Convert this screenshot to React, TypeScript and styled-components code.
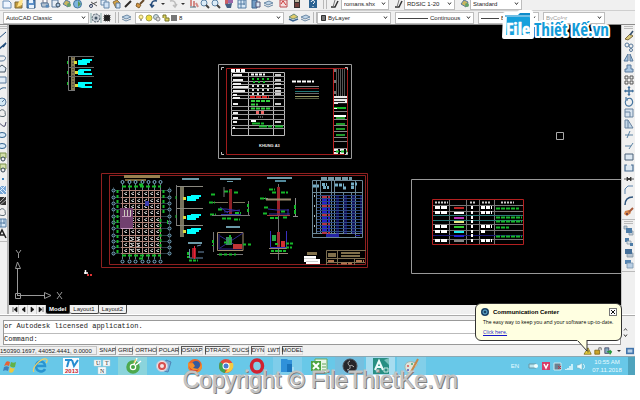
import React from "react";
import styled, { createGlobalStyle } from "styled-components";

const Global = createGlobalStyle`
  * { box-sizing: border-box; }
  body { margin: 0; background: #fff; font-family: "Liberation Sans", Arial, sans-serif; }
  button, select, input { font: inherit; color: inherit; margin: 0; }
`;

const Desktop = styled.div`
  position: relative;
  display: flex;
  flex-direction: column;
  margin-right: 5px;
  overflow: hidden;
  padding-bottom: 25px;
  font-size: 6px;
  color: #222;
`;
const ToolRow = styled.div<{ $top?: boolean }>`
  display: flex;
  align-items: center;
  height: ${(p) => (p.$top ? 11 : 14)}px;
  padding-bottom: ${(p) => (p.$top ? 3 : 0)}px;
  background: #f0f0f0;
  border-bottom: 1px solid ${(p) => (p.$top ? "#cfcfcf" : "#8c8c8c")};
  overflow: hidden;
`;
const Group = styled.div<{ $w: number; $pad?: number }>`
  display: flex;
  flex: none;
  align-items: center;
  justify-content: space-between;
  width: ${(p) => p.$w}px;
  padding: 0 ${(p) => p.$pad ?? 1}px;
`;
const IconButton = styled.button<{ $w?: number }>`
  display: flex;
  flex: none;
  justify-content: center;
  align-items: center;
  width: ${(p) => p.$w ?? 11}px;
  height: 11px;
  padding: 0;
  border: 0;
  background: none;
`;
const Grip = styled.span`
  flex: none;
  width: 4px;
  height: 11px;
  border: solid #b9b9b9;
  border-width: 0 1px;
`;
const ComboBox = styled.label<{ $w: number; $dim?: boolean }>`
  display: flex;
  flex: none;
  align-items: center;
  width: ${(p) => p.$w}px;
  height: 12px;
  margin-right: 4px;
  padding: 0 2px;
  background: #fff;
  border: 1px solid #bdbdbd;
  color: ${(p) => (p.$dim ? "#999" : "#222")};
`;
const ComboSelect = styled.select`
  flex: 1;
  min-width: 0;
  height: 10px;
  padding: 0;
  border: 0;
  background: none;
  appearance: none;
  outline: none;
`;
const Glyph = styled.svg<{ $s?: number }>`
  display: block;
  flex: none;
  width: ${(p) => p.$s ?? 10}px;
  height: ${(p) => p.$s ?? 10}px;
  overflow: visible;
`;

const B = "#58799b";
const L = "#a9c6e2";
const icons: Record<string, React.ReactNode> = {
  sheet: <path d="M1 2H7L9 4V9H1Z" fill="#eef5ff" stroke="#6b8fb8" />,
  open: <><path d="M1 3H5L6 4H8V9H1Z" fill="#c39a3a" stroke="#7c6a3a" /><path d="M5 2L9 0L8 6L3 8Z" fill="#ffe38a" /></>,
  save: <><path d="M1 1H9V9H1Z" fill="#5d91c9" stroke="#31567e" /><path d="M3 1H7V4H3ZM3 6H8V9H3Z" fill="#e8f2fb" /></>,
  print: <><path d="M3 0H7V4H3Z" fill="#fff" stroke="#778" /><path d="M1 4H8L9 8H2Z" fill="#b6c3d0" stroke={B} /><circle cx="7" cy="7" r="1.5" fill="#5588bb" /></>,
  preview: <><path d="M1 1H7V8H1Z" fill="#e6edf5" stroke={B} /><circle cx="7" cy="6" r="2" fill={L} stroke="#345" /></>,
  publish: <><path d="M1 5L4 1L8 3L6 8Z" fill="#c8b560" stroke={B} /><circle cx="7" cy="6" r="2" fill="#64a06a" /></>,
  globe: <><circle cx="4.500" cy="5" r="4" fill="#7db4dc" stroke="#4878a0" /><path d="M5 2L8 5L5 8Z" fill="#5b9852" /></>,
  cut: <><path d="M1 6L8 3M2 3L8 7" stroke="#555" /><circle cx="2" cy="7" r="1.500" fill="none" stroke="#346" /></>,
  copy: <><path d="M1 1H6V6H1Z" fill="#e5effa" stroke="#6688aa" /><path d="M4 3H9V9H4Z" fill="#d1e3f6" stroke="#6688aa" /></>,
  paste: <><path d="M1 3L5 1L8 4L4 9Z" fill="#d9a23d" stroke="#8a7044" /><path d="M4 4H8V9H4Z" fill="#ccdff1" stroke={B} /></>,
  brush: <path d="M8 2L2 8" stroke="#2d2a28" strokeWidth="2" />,
  match: <><path d="M9 1L5 5" stroke="#664a2a" strokeWidth="2" /><path d="M2 4L6 6L4 9L1 7Z" fill="#d59643" stroke="#83602f" /></>,
  undo: <path d="M8 2C3 1 2 4 3 8M1 5L3 8L5 6" fill="none" stroke="#244a79" strokeWidth="1.500" />,
  redo: <path d="M2 2C7 1 8 4 7 8M5 6L7 8L9 5" fill="none" stroke="#bdbdbd" strokeWidth="1.500" />,
  arrow: <path d="M3 4H7L5 6Z" fill="#333" />,
  pan: <><path d="M2 1V7M5 2V8M7 4L9 8" stroke="#d48b86" strokeWidth="2" /><path d="M1 8H7" stroke="#467" /></>,
  zoom: <><circle cx="4" cy="4" r="3" fill="#dcecf8" stroke="#5f84a7" /><path d="M6 6L9 9" stroke="#444" strokeWidth="2" /></>,
  palette: <><path d="M1 1H4V5H1Z" fill="#cd5e64" /><path d="M4 1H9V4H4Z" fill="#9c68aa" /><path d="M1 5L8 4L7 9H3Z" fill="#455f83" /></>,
  grid: <><path d="M1 1H9V9H1Z" fill="#d8e8f6" stroke="#557da4" /><path d="M4 1V9M7 1V6M1 5H8" stroke="#557da4" /></>,
  sheets: <><path d="M1 1H6V9H1Z" fill="#739cc4" stroke="#3b628b" /><path d="M5 3H9V8H5Z" fill="#d9e8f5" stroke="#557" /></>,
  markup: <><path d="M2 1H9V8H2Z" fill="#f5dddd" stroke="#bb4c50" /><path d="M3 5L5 2L8 6" fill="none" stroke="#c33" /></>,
  calc: <><path d="M2 0H8V9H2Z" fill="#34302f" /><path d="M3 1H7V3H3Z" fill="#bcb6a0" /><path d="M3 5H7M3 7H7" stroke="#b0504a" /></>,
  help: <><path d="M1 0H9V9H1Z" fill="#2b6292" /><path d="M3 3C4 0 8 2 6 4L5 5M5 7V8" stroke="#fff" fill="none" /></>,
  pen: <><path d="M1 8H5L8 2" fill="none" stroke="#333" strokeWidth="1.500" /><path d="M3 8L5 1" stroke="#777" /></>,
  gear: <><circle cx="5" cy="5" r="4" fill="#ccd3da" stroke="#44515e" strokeDasharray="2 1" /><circle cx="5" cy="5" r="1.500" fill="#456" /><path d="M0 0V10M10 0V10" stroke="#8aa" /></>,
  dark: <><path d="M2 2H8V8H2Z" fill="#222" stroke="#555" strokeDasharray="1 1" /></>,
  layers: <><path d="M0 4L5 2L9 4L4 6Z" fill="#bed5e9" stroke="#6d8aa6" /><path d="M0 6L4 8L9 6" fill="none" stroke="#6d8aa6" /></>,
  layers2: <><path d="M0 4L5 1L9 4L4 6Z" fill="#e0cb69" stroke="#6d8a76" /><path d="M0 6L4 8L9 6" fill="none" stroke="#3d6794" strokeWidth="1.500" /></>,
  line: <path d="M1 8L9 1" stroke="#234e7c" />,
  ray: <path d="M0 9L9 1M6 5L9 1" stroke="#234e7c" strokeWidth="1.500" />,
  pline: <path d="M1 3H6C10 3 9 8 5 8H3" fill="none" stroke={B} />,
  poly: <path d="M1 4L5 1L9 4L8 8H2Z" fill="#e4edf5" stroke="#456" />,
  rect: <path d="M1 2H9V8H1Z" fill="#e3edf7" stroke={B} />,
  arc: <path d="M1 8C2 3 5 1 9 2" fill="none" stroke="#2f5d8a" />,
  circle: <><circle cx="5" cy="5" r="4" fill="#d5e9f5" stroke={B} /><path d="M5 5L8 2" stroke={B} /></>,
  cloud: <path d="M1 7C0 4 3 4 3 3C5 0 9 3 8 5C10 9 5 9 3 8Z" fill="#eee" stroke="#56656f" />,
  spline: <path d="M1 7C3 1 5 9 8 7L9 3" fill="none" stroke="#446" />,
  ellipse: <ellipse cx="5" cy="5" rx="4" ry="2.500" fill="#d9eaf8" stroke="#35658f" />,
  block: <><path d="M3 1H9V6H3Z" fill="#d3dfaa" stroke="#7a914b" /><circle cx="6" cy="7" r="2" fill="#eee" stroke="#345" /></>,
  point: <path d="M5 4H7V6H5Z" fill="#3f82bb" />,
  hatch: <><path d="M1 1H9V9H1Z" fill="#78a7d6" /><path d="M1 3L7 9M3 1L9 7M1 8L8 1" stroke="#dfeeff" /></>,
  hatch2: <><path d="M1 1H9V9H1Z" fill="#333" /><path d="M1 8L8 1M3 9L9 4" stroke="#aaa" /></>,
  textA: <path d="M1 9L5 1L9 9M3 6H7" fill="none" stroke="#222" strokeWidth="1.500" />,
  erase: <><path d="M1 8L6 3L9 5L4 9Z" fill="#d9c97b" stroke="#7b6940" /><path d="M6 4L9 0" stroke="#35506f" strokeWidth="1.500" /></>,
  copies: <><circle cx="3" cy="3" r="2" fill="none" stroke={B} /><circle cx="7" cy="4" r="2" fill="#eee" stroke={B} /><circle cx="7" cy="8" r="1.500" fill="none" stroke={B} /></>,
  mirror: <path d="M4 1V8H0ZM6 1V8H9Z" fill={L} stroke={B} />,
  offset: <path d="M3 1H7V5H9V8H1V5H3Z" fill={L} stroke={B} />,
  array: <path d="M1 1H4V4H1ZM6 1H9V4H6ZM1 6H4V9H1ZM6 6H9V9H6Z" fill="#eee" stroke="#555" />,
  move: <path d="M5 1V9M1 5H9M4 2L5 1L6 2M4 8L5 9L6 8M2 4L1 5L2 6M8 4L9 5L8 6" fill="none" stroke="#42729e" strokeWidth="1.500" />,
  rotate: <path d="M3 2C8 -1 11 6 6 9C2 10 0 6 2 3L4 3M2 3V0" fill="none" stroke="#4675a0" strokeWidth="1.200" />,
  scale: <path d="M1 1H9V9H1ZM1 4H6V9" fill="#d8e3ee" stroke="#6883a0" />,
  stretch: <path d="M1 1H4L9 9H1ZM4 1V9" fill="#c3d7e8" stroke="#6883a0" />,
  trim: <path d="M1 5H9M6 1L3 8" stroke="#5a82a3" fill="none" />,
  extend: <path d="M1 5H7L9 2M7 5L5 8" stroke="#5a82a3" fill="none" />,
  breakpt: <path d="M1 2H9V8H1Z" fill="#dde8f2" stroke="#4c637b" />,
  breaks: <path d="M3 2H1V8H9V2H7" fill="#dde8f2" stroke="#466b90" strokeWidth="1.200" />,
  join: <path d="M0 5H10M3 3V7L5 5ZM7 3V7L5 5Z" fill="#333" stroke="#333" strokeWidth=".800" />,
  chamfer: <path d="M1 9V4L4 1H9" fill="none" stroke="#5882ab" />,
  fillet: <path d="M1 9C1 4 4 1 9 1" fill="none" stroke="#31577f" strokeWidth="1.500" />,
  explode: <><path d="M1 4L5 3L7 6L3 9L0 7Z" fill="#d68347" /><path d="M5 5L9 1" stroke="#a85b3b" strokeWidth="2" /><path d="M2 6H4V8H2Z" fill="#744" /></>,
  front: <><path d="M5 5H9V9H5ZM0 0H3V3H0Z" fill="#c2ccd5" stroke="#8797a6" strokeWidth=".800" /><path d="M2 2H8V7H2Z" fill="#4e7da8" /></>,
  back: <><path d="M1 1H5V5H1Z" fill="#4e7da8" /><path d="M3 4H7V7H3Z" fill="#dde4ea" stroke="#8797a6" strokeWidth=".800" /><path d="M6 6H9V9H6Z" fill="#4e7da8" /></>,
  above: <><path d="M3 5H9V9H3Z" fill="#b4c2cf" stroke="#8797a6" strokeWidth=".800" /><path d="M1 1H8V6H1Z" fill="#456f99" /></>,
  under: <><path d="M1 1H7V5H1Z" fill="#5685b2" /><path d="M3 4H9V9H3Z" fill="#b9cfe4" stroke="#7894ad" strokeWidth=".800" /></>,
};
const Icon = ({ n, s }: { n: string; s?: number }) => (
  <Glyph $s={s} viewBox="0 0 10 10" aria-hidden="true">{icons[n]}</Glyph>
);
const Tool = ({ n, w }: { n: string; w?: number }) => (
  <IconButton $w={w} aria-label={n}><Icon n={n} /></IconButton>
);
const Chevron = () => (
  <Glyph $s={5} viewBox="0 0 5 5"><path d="M1 1.500L2.500 3.500L4 1.500" fill="none" stroke="#333" /></Glyph>
);
const Combo = ({ w, label, value, dim, lead }: { w: number; label: string; value: string; dim?: boolean; lead?: React.ReactNode }) => (
  <ComboBox $w={w} $dim={dim}>
    {lead}
    <ComboSelect aria-label={label}><option>{value}</option></ComboSelect>
    <Chevron />
  </ComboBox>
);
const Lead = styled.svg<{ $w: number }>`
  flex: none;
  width: ${(p) => p.$w}px;
  height: 8px;
  margin-right: 2px;
`;

const Workspace = styled.div`
  display: flex;
  background: #f0f0f0;
`;
const SideBar = styled.div<{ $right?: boolean }>`
  display: flex;
  flex-direction: column;
  flex: none;
  width: ${(p) => (p.$right ? 14 : 9)}px;
  border-right: ${(p) => (p.$right ? 0 : 2)}px solid #b4b4b4;
  border-left: ${(p) => (p.$right ? 1 : 0)}px solid #c4c4c4;
  overflow: hidden;
`;
const SideGroup = styled.div<{ $right?: boolean }>`
  display: flex;
  flex-direction: column;
  align-items: ${(p) => (p.$right ? "center" : "flex-end")};
  width: ${(p) => (p.$right ? 13 : 7)}px;
  padding-bottom: 2px;
  border-bottom: 1px solid #bbb;
`;
const SideGrip = styled.span`
  width: 9px;
  height: 3px;
  margin: 1px 0;
  border: solid #bbb;
  border-width: 1px 0;
`;
const Center = styled.div`
  flex: 1;
  min-width: 0;
`;
const Drawing = styled.svg`
  display: block;
  width: 100%;
  height: 280px;
  background: #000;
`;
const Tabs = styled.div`
  display: flex;
  align-items: center;
  height: 9px;
  padding-left: 1px;
`;
const NavButton = styled.button`
  display: flex;
  width: 9px;
  height: 9px;
  padding: 1px;
  border: 0;
  border-right: 1px solid #ccc;
  background: none;
`;
const Tab = styled.button<{ $on?: boolean }>`
  height: 9px;
  padding: 0 3px;
  border: 0;
  line-height: 8px;
  font-weight: ${(p) => (p.$on ? "bold" : "normal")};
  color: ${(p) => (p.$on ? "#fff" : "#222")};
  background: ${(p) => (p.$on ? "#000" : "#f0f0f0")};
  border-right: 1px solid #444;
  border-bottom: 1px solid #444;
  border-radius: 0 0 2px 2px;
`;

const Command = styled.div`
  display: flex;
  margin-top: 1px;
  padding: 4px 4px 0 0;
  background: #f0f0f0;
  border-top: 1px solid #aaa;
`;
const CommandGrip = styled.span`
  width: 4px;
  border-right: 1px solid #999;
`;
const CommandBody = styled.div`
  flex: 1;
  background: #fff;
  border: 1px solid #999;
  border-left: 0;
  font-family: "Liberation Mono", monospace;
  font-size: 7px;
`;
const History = styled.div`
  height: 12px;
  line-height: 10px;
`;
const Prompt = styled.label`
  display: flex;
  height: 11px;
  border-top: 1px solid #bbb;
  line-height: 10px;
`;
const PromptInput = styled.input`
  flex: 1;
  min-width: 0;
  border: 0;
  outline: none;
  padding: 0;
  background: none;
`;
const Scroll = styled.div`
  display: flex;
  flex-direction: column;
  justify-content: center;
  gap: 1px;
  width: 10px;
  padding: 2px;
`;
const Status = styled.div`
  display: flex;
  align-items: center;
  gap: 2px;
  height: 11px;
  padding-right: 1px;
  background: #f0f0f0;
`;
const Coords = styled.span`
  width: 97px;
  height: 9px;
  line-height: 8px;
  border: 1px solid #c4c4c4;
  border-left: 0;
  white-space: nowrap;
`;
const Mode = styled.button<{ $w: number; $on?: boolean }>`
  display: flex;
  align-items: center;
  justify-content: center;
  width: ${(p) => p.$w}px;
  height: 9px;
  padding: 0;
  line-height: 7px;
  background: #f0f0f0;
  border: 1px solid;
  border-color: ${(p) => (p.$on ? "#555 #ddd #ddd #555" : "#fafafa #999 #aaa #fafafa")};
`;
const Spring = styled.span`
  flex: 1;
`;

const Taskbar = styled.div`
  display: flex;
  align-items: stretch;
  height: 19px;
  background: #68c8e8;
  border-top: 1px solid #8ba8b3;
`;
const Task = styled.button<{ $w?: number; $bg?: string }>`
  display: flex;
  flex: none;
  align-items: center;
  justify-content: center;
  width: ${(p) => p.$w ?? 29}px;
  margin-right: 2px;
  padding: 0;
  border: 0;
  background: ${(p) => p.$bg ?? "none"};
`;
const Tray = styled.div`
  display: flex;
  align-items: center;
  gap: 3px;
  color: #e9fbff;
`;
const Clock = styled.time`
  width: 36px;
  text-align: center;
  line-height: 8px;
`;
const ShowDesktop = styled.button`
  width: 7px;
  align-self: stretch;
  padding: 0;
  border: 0;
  background: #4fa3bd;
`;

const Balloon = styled.section`
  position: absolute;
  top: 303px;
  right: 13px;
  width: 147px;
  height: 38px;
  padding: 3px 4px 0 7px;
  background: #ffffe1;
  border: 1px solid #333;
  border-radius: 6px;
`;
const BalloonHead = styled.header`
  display: flex;
  align-items: center;
  gap: 4px;
  height: 9px;
  margin-left: -2px;
  font-weight: bold;
  color: #000;
`;
const BalloonText = styled.p`
  margin: 2px 0 0;
  font-family: "Open Sans", "Liberation Sans", sans-serif;
  font-size: 5px;
  line-height: 8px;
  color: #000;
  white-space: nowrap;
`;
const Link = styled.a`
  color: #1515c8;
  text-decoration: underline;
`;
const CloseButton = styled.button`
  display: flex;
  width: 8px;
  height: 8px;
  margin-left: auto;
  padding: 1px;
  background: #fff;
  border: 1px solid #777;
`;
const Tail = styled.svg`
  position: absolute;
  top: 36px;
  right: 30px;
  width: 14px;
  height: 13px;
`;
const Logo = styled.svg`
  position: absolute;
  top: 10px;
  right: 24px;
  width: 110px;
  height: 32px;
  overflow: visible;
`;
const Watermark = styled.div`
  position: absolute;
  top: 367px;
  left: 0;
  right: 0;
  padding-left: 6px;
  text-align: center;
  font-size: 23px;
  line-height: 26px;
  white-space: nowrap;
  color: #c4c4c4;
  text-shadow: 1px 1px 0 #7d7d7d;
  -webkit-text-stroke: 1px #c0c0c0;
  paint-order: stroke;
`;

const H = ({ x1, x2, y, c }: { x1: number; x2: number; y: number; c: string }) => <path d={`M${x1} ${y}H${x2}`} stroke={c} />;
const V = ({ x, y1, y2, c }: { x: number; y1: number; y2: number; c: string }) => <path d={`M${x} ${y1}V${y2}`} stroke={c} />;
const R = ({ b, c }: { b: number[]; c: string }) => <rect x={b[0]} y={b[1]} width={b[2]} height={b[3]} fill={c} />;
const Dash = ({ d, c, w = 1, a = "2 1" }: { d: string; c: string; w?: number; a?: string }) => (
  <path d={d} stroke={c} strokeWidth={w} strokeDasharray={a} fill="none" />
);
const Leaf = ({ x, y }: { x: number; y: number }) => (
  <>
    <path d={`M${x} ${y + 1}H${x + 4}V${y}H${x + 14}V${y + 2}H${x + 12}V${y + 4}H${x + 9}V${y + 6}H${x}Z`} fill="#0ff" />
    <R b={[x - 4, y + 2, 3, 3]} c="#dddc40" />
  </>
);
const G = "#16b82a";
const cols = [122, 129, 135, 142, 148, 154, 160];
const rows = [190, 197, 203, 209, 216, 222, 228, 235, 241, 247, 253];

const WallDetail = () => (
  <g>
    <R b={[71, 56, 4, 34]} c="#847953" />
    <Dash d="M73 57V90" c="#5a5340" w={2} a="1 2" />
    {[56, 67, 76].map((y) => <H key={y} x1={68} x2={94} y={y + 0.5} c="#666" />)}
    <path d="M68.500 56V90.500H75" stroke="#777" fill="none" />
    <Leaf x={78} y={59} />
    <path d="M78 70L80 69H91V71H84V73H92V75H78ZM78 82H92V84H85V86H92V88H82L78 87Z" fill="#0ff" />
    <R b={[75, 71, 3, 3]} c="#dddc40" /><R b={[75, 84, 3, 3]} c="#dddc40" />
    {[61, 71, 82].map((y) => <V key={y} x={67.5} y1={y} y2={y + 3} c={G} />)}
  </g>
);

const lineRows = [76, 81, 84, 88, 92, 95, 98, 106, 110, 114, 119, 125, 128];
const SheetFrame = () => (
  <g fill="none">
    <path d="M218.500 64.500H351.500V158.500H218.500Z" stroke="#999" />
    <path d="M226.500 68.500H347.500V154.500H226.500Z" stroke="#a11c1c" />
    <V x={333.5} y1={68} y2={154} c="#c02020" />
    <path d="M221.500 70V67.500H224M345 67.500H347.500V70M221.500 152V154.500H224M345 154.500H347.500V152" stroke="#bbb" />
    <path d="M231.500 72.500H284.500V135.500H231.500ZM248.500 72V136M273.500 72V136" stroke="#bbb" />
    {lineRows.map((y) => <H key={y} x1={231} x2={285} y={y + 0.5} c="#999" />)}
    <Dash d="M231 70.500H245" c="#fff" w={3} a="4 1" />
    <Dash d="M251 74.500H265" c="#fff" w={2} a="3 1" />
    {[[9, 74], [10, 79], [8, 83], [15, 86], [12, 90], [4, 94], [7, 97], [5, 103], [5, 112], [5, 117], [4, 121], [2, 127]].map(([w, y]) => (
      <R key={y} b={[233, y, w, 2]} c="#eee" />
    ))}
    {[74, 79, 83, 87, 90, 93, 103, 121].map((y) => <R key={y} b={[275, y, 6, 2]} c="#ccc" />)}
    <Dash d="M252 79H272M253 82H268" c={G} w={2} a="2 3" />
    <Dash d="M252 86H270M252 90H270M252 94H266" c="#ddd" w={2} a="2 3" />
    <Dash d="M250 97H269" c="#d22" w={2} a="5 1" />
    <Dash d="M251 101H270M251 104.500H258M251 108.500H271" c="#35d13f" w={2} a="4 1" />
    <Dash d="M256 112.500H266" c="#e66" w={3} a="3 2" />
    <Dash d="M258 117H263" c="#aaa" a="1 1" />
    <R b={[251, 120, 5, 2]} c="#fff" />
    <Dash d="M252 123.500H264M259 126.500H272M275 126.500H284" c={G} w={2} a="8 1" />
    <Dash d="M292 81.500H314" c="#fff" w={2} a="4 1" />
    {[["86", "#888"], ["88", "#922"], ["91", "#277"], ["93", "#666"], ["96", "#996"], ["98", "#586040"]].map(([y, c]) => (
      <H key={y} x1={295} x2={319} y={+y + 0.5} c={c} />
    ))}
    {[336, 338, 340, 342, 344].map((x) => <V key={x} x={x + 0.5} y1={69} y2={96} c="#555" />)}
    <Dash d="M335 69V95" c="#eee" w={1} a="3 8" />
    <R b={[334, 96, 13, 8]} c="#e8e8e8" />
    <path d="M334 98.500H347M334 101.500H345M338 103.500H347" stroke="#222" />
    <R b={[334, 107, 12, 2]} c={G} /><R b={[334, 108, 3, 1]} c="#fff" />
    <R b={[334, 115, 12, 2]} c="#fff" />
    {[111, 119, 125, 131, 137, 141, 148].map((y) => <H key={y} x1={334} x2={347} y={y + 0.5} c="#888" />)}
    {[117, 123, 128, 134].map((y) => <R key={y} b={[336, y, 9, 2]} c="#229a2c" />)}
    <Dash d="M334 150H347M334 153H347" c="#eee" w={2} a="4 2" />
    <Dash d="M336 151.500H347" c={G} w={2} a="3 2" />
    <text x="259" y="147" fill="#eee" fontSize="4" fontWeight="bold">KHUNG A3</text>
  </g>
);

const FloorPlan = () => (
  <g fill="none">
    <R b={[124, 175, 36, 3]} c="#9a8150" /><R b={[125, 179, 21, 2]} c="#776336" />
    {cols.map((x) => (
      <g key={x}>
        <V x={x + 0.5} y1={184} y2={259} c="#69808c" />
        <V x={x + 0.5} y1={190} y2={253} c="#b08880" />
        <circle cx={x + 0.5} cy={182} r={1.5} stroke="#7fb4d0" />
        <circle cx={x + 0.5} cy={261.5} r={1.5} stroke="#7fb4d0" />
      </g>
    ))}
    {rows.map((y) => (
      <g key={y}>
        <H x1={115} x2={168} y={y + 0.5} c="#2d3c45" />
        <H x1={121} x2={161} y={y + 0.5} c="#ad8277" />
        <circle cx={113.5} cy={y + 0.5} r={1.5} stroke="#7fb4d0" />
        <circle cx={169.5} cy={y + 0.5} r={1.5} stroke="#7fb4d0" />
        {y < 253 && cols.slice(0, 6).map((x) => <path key={x} d={`M${x + 2} ${y + 4}l3 -2M${x + 3} ${y + 4.5}h2`} stroke="#ccc" />)}
      </g>
    ))}
    <R b={[120, 208, 13, 21]} c="#71406f" />
    <path d="M122 216.500H131M121 228.500H133" stroke="#c79bc0" />
    <Dash d="M124 213H131" c="#ccb" w={6} a="1 2" />
    <Dash d="M117.500 190V254M163.500 190V215M160.500 219V250" c={G} w={2} a="3 2" />
    <Dash d="M122 186.500H161M122 255.500H161M139 258.500H144M139 184.500H144" c={G} w={2} a="4 2" />
    <R b={[145, 201, 4, 5]} c="#3d3fb0" />
    <path d="M113.500 187V256M169.500 187V256" stroke="#526975" strokeWidth=".500" />
    <Dash d="M131 237V252M138 237V250" c="#bbb" w={3} a="1 2" />
    <Dash d="M114 217.500V225M167.500 220V225" c={G} w={1} a="4 1" />
  </g>
);

const Sections = () => (
  <g fill="none">
    <R b={[182, 178, 17, 2]} c="#6b9aa9" />
    <R b={[180, 186, 4, 51]} c="#77745d" />
    {[186, 208, 225].map((y) => <H key={y} x1={176} x2={203} y={y + 0.5} c="#8b8980" />)}
    <V x={176.5} y1={185} y2={226} c="#777" />
    <Dash d="M176 196V220" c={G} a="3 16" />
    <Leaf x={187} y={195} /><Leaf x={187} y={214} /><Leaf x={187} y={228} />
    <R b={[188, 242, 14, 2]} c="#6b9aa9" />
    <path d="M189.500 249V258H203M197 246L201 245M198 252H204" stroke="#6f8faf" />
    <R b={[192, 248, 4, 10]} c="#a51d2d" /><V x={194.5} y1={246} y2={259} c="#e23" />
    <Dash d="M189 260.500H198M188 252V258" c={G} w={2} a="3 1" />

    <R b={[220, 178, 21, 2]} c="#6b9aa9" /><R b={[227, 181, 6, 1]} c="#6b9aa9" />
    <R b={[229, 189, 3, 26]} c="#8d1f26" />
    <path d="M213 202.500H228M233 202.500H245" stroke="#7e755f" />
    <path d="M221 214.500H241M224 212L240 210M220 207L228 213M218 209H226L240 211" stroke="#352fa0" />
    <H x1={222} x2={240} y={215.5} c="#a2383e" />
    <Dash d="M211 194.500H216M224 191.500H230M234 192.500H238M209 202.500H215M218 209.500H223M210 214.500H216M235 213H241M222 218.500H231M234 219.500H240" c={G} w={2} a="4 1" />
    <path d="M248.500 201V216M224 187V197M212 215.500H250" stroke="#777" />
    <Dash d="M248 204V214" c={G} w={2} a="3 2" />

    <R b={[267, 177, 25, 2]} c="#6b9aa9" /><R b={[275, 180, 11, 2]} c="#52899b" />
    <V x={278.5} y1={184} y2={260} c="#707070" />
    <R b={[277, 187, 3, 28]} c="#9b2028" />
    <path d="M266 199.500H291" stroke="#9c8c70" strokeWidth="2" />
    <path d="M268 209L277 210H289M269 214H290M288 209V215" stroke="#352fa0" />
    <H x1={267} x2={290} y={215.5} c="#a2383e" />
    <path d="M260 198.500H268M295.500 198V216M293 216.500H298" stroke="#8a8a8a" />
    <Dash d="M269 189.500H275M272 192.500H277M281 192.500H288M260 198.500H266M264 207.500H269M263 213.500H268M281 211.500H286M270 218H278M283 217.500H287M295 205V214" c={G} w={2} a="4 1" />

    <R b={[226, 226, 14, 2]} c="#6b9aa9" />
    <path d="M217.500 232.500H243V250.500H217.500Z" stroke="#a38e70" />
    <path d="M220 236L240 248M220 248L243 233M219 234V249H242" stroke="#30298c" />
    <R b={[233, 244, 9, 5]} c="#c03536" /><R b={[226, 237, 6, 8]} c="#3b8e61" />
    <path d="M213.500 232V252M217 254.500H243" stroke="#777" />
    <Dash d="M213 240V246M219 254.500H236M224 242.500H230M230 235V243M243 244.500H251" c={G} w={2} a="3 2" />

    <path d="M270.500 231V247.500H286.500V231" stroke="#3930bd" />
    <R b={[277, 232, 3, 15]} c="#a52a35" /><R b={[281, 241, 4, 6]} c="#d12f31" /><R b={[272, 235, 4, 6]} c="#26a747" />
    <path d="M269 248.500H287M270 253.500H288" stroke="#988873" />
    <Dash d="M271 251H287M286 243.500H294M286 247.500H292M275 244H278" c={G} w={2} a="3 1" />
  </g>
);

const Schedule = () => (
  <g fill="none">
    <Dash d="M321 178.500H352" c="#739aa8" w={3} a="6 1" />
    <path d="M312.500 180.500H362.500V237.500H312.500ZM316.500 180V234M320.500 180V234M331.500 180V234M334.500 180V234M343.500 192V234M351.500 192V234M355.500 180V237M312 192.500H363M312 233.500H363" stroke="#6b8796" />
    {[195, 198, 201, 204, 207, 210, 213, 216, 219, 222, 225, 228, 231].map((y, i) => (
      <g key={y}>
        <H x1={317} x2={362} y={y + 0.5} c="#2d4a80" />
        <Dash d={`M322 ${y + 2}H330`} c={i % 3 === 0 ? "#b23445" : "#2423c9"} w={2} a="5 1" />
        <Dash d={`M336 ${y + 2}H362`} c="#2420b6" a="3 5" />
      </g>
    ))}
    <Dash d="M313 186H319M322 184.500H327M335 185H344M351 184H357M323 187.500H329M343 188H347M351 187.500H354" c="#77afc7" w={3} a="3 1" />
    <R b={[326, 234, 13, 3]} c="#2424a5" /><R b={[355, 235, 5, 1]} c="#2424a5" />
    <Dash d="M314.500 195V232" c="#a9bbc2" a="2 8" />
    <R b={[307, 252, 10, 3]} c="#81714c" />
    <path d="M304 256H316V259H320V264H306V262H304Z" fill="#fff" />
    <path d="M304 258.500H316M306 261.500H318" stroke="#999" strokeWidth=".500" />
    <path d="M326.500 265V250.500H366M337.500 250V265M327 258.500H365M327 262.500H365M354.500 258V265" stroke="#7b6e50" />
    <R b={[328, 253, 8, 4]} c="#81714c" /><R b={[341, 252, 19, 2]} c="#81714c" /><R b={[341, 255, 19, 2]} c="#81714c" />
    <Dash d="M328 261H335M341 263.500H352M356 261H364" c="#b07750" w={2} a="6 1" />
  </g>
);

const legend: [number, string, number][] = [
  [207, "#b22", 1], [212, "#fff", 1], [217, "#b3b", 0], [221, "#ee8", 0],
  [226, "#3c3", 1], [231, "#2ee", 1], [235, "#22c", 0], [240, "#888", 1],
];
const Legend = () => (
  <g fill="none">
    <path d="M622 179.500H411.500V273.500H622" stroke="#999" />
    {[205, 211, 224, 230, 239].map((y) => <H key={y} x1={432} x2={524} y={y + 0.5} c="#777" />)}
    <path d="M449.500 199V244M466.500 199V244M479.500 199V244M494.500 199V244" stroke="#777" />
    <path d="M433 215.500H523M433 220.500H523" stroke="#2a7777" /><H x1={433} x2={523} y={235.5} c="#1a1a77" />
    <path d="M432.500 199.500H523.500V244.500H432.500Z" stroke="#b32020" />
    <Dash d="M435 202.500H448M470 202.500H476M482 202.500H491M501 202.500H514" c="#ccc" w={2} a="2 1" />
    {legend.map(([y, c, names]) => (
      <g key={y}>
        <R b={[454, y, 10, 2]} c={c} />
        <R b={[471, y - 1, 2, 3]} c="#fff" />
        {names === 1 && <><R b={[435, y - 1, 5, 3]} c="#fff" /><R b={[441, y - 1, 6, 3]} c="#fff" /><Dash d={`M481 ${y + 0.5}H${y === 231 ? 486 : 492}`} c="#fff" w={3} a="4 1" /></>}
      </g>
    ))}
    {[[208, 519], [217, 522], [221, 522], [227, 509], [236, 522]].map(([y, x]) => <Dash key={y} d={`M496 ${y + 0.5}H${x}`} c={G} w={2} a="4 1" />)}
  </g>
);

const draw = ["line", "ray", "pline", "poly", "rect", "arc", "circle", "cloud", "spline", "ellipse", "ellipse", "block", "block", "point", "hatch", "hatch2", "cloud", "grid", "textA"];
const modify = ["erase", "copies", "mirror", "offset", "array", "move", "rotate", "scale", "stretch", "trim", "extend", "breakpt", "breaks", "join", "chamfer", "fillet", "explode"];
const order = ["front", "back", "above", "under"];
const modes: [string, number, boolean][] = [["SNAP", 17, false], ["GRID", 15, false], ["ORTHO", 22, false], ["POLAR", 20, false], ["OSNAP", 22, true], ["OTRACK", 25, true], ["DUCS", 17, false], ["DYN", 14, true], ["LWT", 13, false], ["MODEL", 21, true]];
const nav = ["M2 1V6M6 1V6L3 3.500Z", "M5 1V6L2 3.500Z", "M2 1V6L5 3.500Z", "M5 1V6M1 1V6L4 3.500Z"];

const A = ({ children }: { children: React.ReactNode }) => <Glyph $s={16} viewBox="0 0 16 16">{children}</Glyph>;
const tasks: [string, string | undefined, React.ReactNode][] = [
  ["Internet Explorer", undefined, <A><path d="M13 11C11 15 4 14 4 8C4 2 13 2 13 8H5" fill="none" stroke="#2994d1" strokeWidth="2.500" /><path d="M2 14C-1 10 9 0 14 1C16 2 15 4 14 5" fill="none" stroke="#f1ce63" strokeWidth="1.200" /></A>],
  ["TV 2013", undefined, <A><path d="M0 0H16V16H0Z" fill="#f7fbff" /><path d="M2 2H9M6 2L4 9M9 2L11 8L15 2" stroke="#258bd0" strokeWidth="2" fill="none" /><text x="2" y="15" fontSize="6" fontWeight="bold" fill="#c91f2d">2013</text></A>],
  ["UTN", undefined, <A><path d="M0 2H7V8H0ZM9 2H16V8H9ZM4 9H12V16H4Z" fill="#f5f9fb" stroke="#b9ccd3" strokeWidth=".500" /><g fontFamily="Liberation Serif" fontSize="6" fill="#333"><text x="2" y="7">U</text><text x="11" y="7">T</text><text x="6" y="15">N</text></g></A>],
  ["Coc Coc", "#8bd4dc", <A><circle cx="8" cy="9" r="5" fill="#fff" stroke="#4da94d" strokeWidth="3.500" /><circle cx="8" cy="9" r="2" fill="#46a346" /><path d="M9 6L12 0M11 7L16 3" stroke="#fff" strokeWidth="1.500" /><path d="M9 5L11 1" stroke="#f0bf45" /></A>],
  ["Reader", undefined, <A><path d="M10 2L15 4L12 14L8 13Z" fill="#7aabd6" stroke="#4e83b5" /><circle cx="6" cy="8" r="5.500" fill="#f7e2e4" stroke="#b9cadb" /><circle cx="6" cy="8" r="3" fill="none" stroke="#d64e4e" strokeWidth="2" /></A>],
  ["Firefox", undefined, <A><circle cx="8" cy="8" r="7" fill="#e8642b" /><circle cx="9" cy="7" r="4" fill="#345b9e" /><path d="M1 4C2 6 4 5 6 5L8 8L6 10L11 11L15 6C16 18 1 17 1 7Z" fill="#f28d2c" /><path d="M2 8C4 13 9 13 12 11C9 16 3 14 2 8Z" fill="#d93838" /></A>],
  ["Chrome", undefined, <A><circle cx="8" cy="8" r="7" fill="#e34b3c" /><path d="M2 4L8 8L7 15C1 14 0 9 2 4Z" fill="#3ca754" /><path d="M8 5H15C17 11 12 15 7 15L11 9Z" fill="#f5cb42" /><circle cx="8" cy="8" r="3.500" fill="#fff" /><circle cx="8" cy="8" r="2.500" fill="#477bd1" /></A>],
  ["Opera", undefined, <A><ellipse cx="8" cy="8" rx="5.500" ry="6" fill="#83cfe7" stroke="#d02231" strokeWidth="3.500" /></A>],
  ["Explorer", "#7fcdea", <A><path d="M1 1H7L8 2H12V14H1Z" fill="#2f91da" /><path d="M7 6H12V14H7Z" fill="#1973bb" /><path d="M12 9H14V14H12Z" fill="#a6dcf3" /></A>],
  ["Excel", undefined, <A><path d="M4 1H16V15H4Z" fill="#e9f5e7" stroke="#69a85c" /><path d="M0 3H10V13H0Z" fill="#4da441" /><path d="M2 5L8 11M8 5L2 11" stroke="#fff" strokeWidth="2" /><path d="M11 6H15M11 9H15M11 12H15" stroke="#63a45c" /></A>],
  ["Recorder", "#76bfdf", <A><circle cx="8" cy="8" r="7" fill="#252529" stroke="#4d4e55" /><path d="M8 3C5 4 6 7 8 8M12 9C9 6 8 8 8 8M5 12C9 11 8 9 8 8" stroke="#bbb" fill="none" /></A>],
  ["AutoCAD", "#a7dcef", <A><path d="M0 0H16V16H0Z" fill="#288f83" /><path d="M2 12L6 3L10 12M3 9H9" fill="none" stroke="#eefafa" strokeWidth="2" /><path d="M11 10H15V14H11Z" fill="none" stroke="#cee9e4" /><path d="M11 2L16 0V7Z" fill="#7bc2bd" /></A>],
  ["Paint", "#82cfe9", <A><path d="M1 10C0 3 8 2 13 6C14 9 8 9 8 14C4 16 2 13 1 10Z" fill="#dfe5dc" stroke="#9fb3ae" /><circle cx="4" cy="8" r="1" fill="#d55" /><circle cx="8" cy="6" r="1" fill="#4a7" /><circle cx="4" cy="12" r="1" fill="#55b" /><path d="M7 14L14 1" stroke="#c78747" strokeWidth="2" /></A>],
];

export default function App() {
  return (
    <Desktop>
      <Global />
      <ToolRow $top>
        <Group $w={37}>{["sheet", "open", "save"].map((n) => <Tool key={n} n={n} />)}</Group>
        <Group $w={49} $pad={2}>{["print", "preview", "publish", "globe"].map((n) => <Tool key={n} n={n} />)}</Group>
        <Group $w={61} $pad={2}>{["cut", "copy", "paste", "brush", "match"].map((n) => <Tool key={n} n={n} />)}</Group>
        <Group $w={40}><Tool n="undo" /><Tool n="arrow" w={6} /><Tool n="redo" /><Tool n="arrow" w={6} /></Group>
        <Group $w={35}><Tool n="pan" /><Tool n="zoom" /><Tool n="zoom" /></Group>
        <Group $w={100}>{["palette", "grid", "sheets", "layers", "markup", "calc"].map((n) => <Tool key={n} n={n} />)}<Tool n="help" w={16} /></Group>
        <Group $w={19}><Grip /><Tool n="pen" /></Group>
        <Combo w={48} label="Text style" value="romans.shx" />
        <Tool n="pen" />
        <Combo w={51} label="Dimension style" value="RDSIC 1-20" />
        <Tool n="publish" />
        <Combo w={52} label="Table style" value="Standard" />
      </ToolRow>
      <ToolRow>
        <Group $w={3} />
        <Combo w={86} label="Workspace" value="AutoCAD Classic" />
        <Tool n="gear" w={5} />
        <Group $w={37} $pad={3}><Tool n="dark" /><Grip /><Tool n="layers" /></Group>
        <Combo w={149} label="Layer" value="8" lead={
          <Lead $w={39} viewBox="0 0 39 8">
            <circle cx="3" cy="3" r="2" fill="#fff2a0" stroke="#b6a85b" /><path d="M2 6H4" stroke="#555" />
            <circle cx="11" cy="4" r="3" fill="#f0dc3b" stroke="#a5a44d" />
            <circle cx="18" cy="3" r="2.500" fill="#cad8db" stroke="#778d95" /><circle cx="20" cy="5" r="2" fill="#ddd" stroke="#888" />
            <path d="M25 4V1H28V4H31V7H27V4" fill="#ded35c" stroke="#77752a" />
            <path d="M33 1H39V7H33Z" fill="#777" />
          </Lead>
        } />
        <Group $w={29} $pad={0}><Tool n="layers2" /><Tool n="layers" /><Grip /></Group>
        <Combo w={74} label="Color" value="ByLayer" lead={<Lead $w={6} viewBox="0 0 6 8"><path d="M1.500 1.500H5.500V6.500H1.500Z" fill="#777" stroke="#333" /></Lead>} />
        <Combo w={79} label="Linetype" value="Continuous" lead={<Lead $w={30} viewBox="0 0 30 8"><path d="M0 4.500H30" stroke="#444" /></Lead>} />
        <Combo w={61} label="Lineweight" value="ByLayer" lead={<Lead $w={18} viewBox="0 0 18 8"><path d="M0 4.500H18" stroke="#444" /></Lead>} />
        <Combo w={62} dim label="Plot style" value="ByColor" />
      </ToolRow>

      <Workspace>
        <SideBar>
          <SideGroup><SideGrip />{draw.map((n, i) => <Tool key={i} n={n} />)}</SideGroup>
        </SideBar>
        <Center>
          <Drawing viewBox="9 25 612 280" preserveAspectRatio="xMinYMin slice" role="img" aria-label="Model space">
            <WallDetail />
            <SheetFrame />
            <path d="M101.500 173.500H367.500V267.500H101.500ZM109.500 175.500H365.500V264.500H109.500Z" fill="none" stroke="#8f2020" />
            <FloorPlan />
            <Sections />
            <Schedule />
            <Legend />
            <path d="M556.500 132.500H563.500V139.500H556.500Z" fill="none" stroke="#aaa" />
            <path d="M15.500 293.500H20.500V298.500H15.500ZM17.500 296V268M15.500 268.500L17.500 262L20.500 268.500ZM18 295.500H44M44.500 292.500L51 295.500L44.500 298.500ZM16 250L18.500 253.500V258M21 250L18.500 253.500M57 292L62 299M62 292L57 299" fill="none" stroke="#999" />
            <path d="M85.500 270V274M84 273H88" stroke="#fff" strokeWidth="1.500" /><path d="M87 275H92" stroke="#d33" strokeWidth="2" strokeDasharray="2 1" />
          </Drawing>
          <Tabs>
            {nav.map((d) => <NavButton key={d} aria-label="Scroll tabs"><Glyph $s={7} viewBox="0 0 7 7"><path d={d} fill="#111" stroke="#111" strokeWidth=".600" /></Glyph></NavButton>)}
            <Tab $on>Model</Tab><Tab>Layout1</Tab><Tab>Layout2</Tab>
          </Tabs>
        </Center>
        <SideBar $right>
          <SideGroup $right><SideGrip />{modify.map((n) => <Tool key={n} n={n} />)}</SideGroup>
          <SideGroup $right><SideGrip />{order.map((n) => <Tool key={n} n={n} />)}</SideGroup>
        </SideBar>
      </Workspace>

      <Command>
        <CommandGrip />
        <CommandBody>
          <History>or Autodesk licensed application.</History>
          <Prompt>Command:<PromptInput aria-label="Command" /></Prompt>
        </CommandBody>
        <Scroll>
          <Glyph $s={5} viewBox="0 0 5 5"><path d="M1 3.500L2.500 1.500L4 3.500" fill="none" stroke="#555" /></Glyph>
          <Chevron />
        </Scroll>
      </Command>
      <Status>
        <Coords>150390.1697, 44052.4441, 0.0000</Coords>
        {modes.map(([t, w, on]) => <Mode key={t} $w={w} $on={on}>{t}</Mode>)}
        <Spring />
        <Glyph $s={8} viewBox="0 0 10 10"><path d="M0 9L5 1L9 9Z" fill="#f0d33b" stroke="#766b20" /><path d="M5 4V7" stroke="#222" /></Glyph>
        <Glyph $s={8} viewBox="0 0 10 10"><path d="M1 4H7V9H1Z" fill="#caa52b" stroke="#7e6310" /><path d="M6 4V1H9V4" fill="none" stroke="#555" /></Glyph>
        <Glyph $s={8} viewBox="0 0 10 10"><path d="M1 1H6V8H1Z" fill="#83a9bd" stroke="#446" /><path d="M4 6H9M7 4L9 6L7 9" stroke="#26953a" strokeWidth="2" fill="none" /></Glyph>
        <Icon n="arrow" s={10} />
        <Glyph $s={8} viewBox="0 0 10 10"><path d="M0 1H10V9H0Z" fill="#4375ac" /><path d="M2 3H8V7H2Z" fill="#b6cee6" /></Glyph>
      </Status>

      <Taskbar>
        <Task $w={18} aria-label="Start"><Glyph $s={13} viewBox="0 0 13 13"><path d="M3 2C4 1 5 1 7 2L6 6C4 5 3 5 1 6Z" fill="#e66136" /><path d="M8 2C10 3 11 3 13 2L12 7C10 8 8 7 7 6Z" fill="#62b246" /><path d="M1 7C3 6 4 6 6 7L5 11C3 10 2 10 0 11Z" fill="#3c80bd" /><path d="M7 7C8 8 10 9 12 8L10 12C9 13 7 13 6 12Z" fill="#f0c83c" /></Glyph></Task>
        <Task $w={3} as="span" />
        {tasks.map(([name, bg, art]) => <Task key={name} $bg={bg} aria-label={name}>{art}</Task>)}
        <Spring />
        <Tray>
          <span>EN</span>
          <Glyph $s={4} viewBox="0 0 4 4" />
          <Glyph $s={10} viewBox="0 0 10 10"><path d="M0 3H7V7H0Z" fill="#bce6ef" stroke="#6897a5" /><circle cx="7" cy="5" r="2" fill="#f0ffff" /></Glyph>
          <Glyph $s={8} viewBox="0 0 8 8"><path d="M0 0H8V8H0Z" fill="#d83c68" /><path d="M2 2L4 6L6 2" fill="none" stroke="#fff" strokeWidth="1.500" /></Glyph>
          <Glyph $s={9} viewBox="0 0 9 9"><path d="M1 1H8V8H1Z" fill="#6a8090" stroke="#cceaf2" /><path d="M5 4L8 7M8 4L5 7" stroke="#b34" /></Glyph>
          <Glyph $s={9} viewBox="0 0 9 9"><path d="M1 7V8M3 6V8M5 4V8M7 2V8" stroke="#e8fbff" strokeWidth="1.500" /></Glyph>
          <Glyph $s={9} viewBox="0 0 9 9"><path d="M0 3H2L5 1V8L2 6H0Z" fill="#e8fbff" stroke="#78a9b6" strokeWidth=".500" /><path d="M6 2C8 3 8 6 6 7" fill="none" stroke="#e8fbff" /></Glyph>
          <Clock>10:55 AM<br />07.11.2018</Clock>
          <ShowDesktop aria-label="Show desktop" />
        </Tray>
      </Taskbar>

      <Balloon>
        <BalloonHead>
          <Glyph $s={8} viewBox="0 0 8 8"><circle cx="4" cy="4" r="4" fill="#1b4264" /><circle cx="4" cy="4" r="2" fill="none" stroke="#68b7d7" /></Glyph>
          Communication Center
          <CloseButton aria-label="Close"><Glyph $s={4} viewBox="0 0 4 4"><path d="M0 0L4 4M4 0L0 4" stroke="#111" /></Glyph></CloseButton>
        </BalloonHead>
        <BalloonText>The easy way to keep you and your software up-to-date.</BalloonText>
        <BalloonText><Link href="#help">Click here.</Link></BalloonText>
        <Tail viewBox="0 0 14 13"><path d="M0 0L10 11V0Z" fill="#ffffe1" /><path d="M1 1L10 11V0" fill="none" stroke="#333" /></Tail>
      </Balloon>

      <Logo viewBox="0 0 110 32" role="img" aria-label="FileThiết Kế.vn">
        <path d="M4 4H17L19 2H30L31 8V27H3Z" fill="#16a0dc" stroke="#fff" strokeWidth="4" strokeLinejoin="round" />
        <path d="M4 5H17L19 3H29V7H4Z" fill="#0d8bca" />
        <path d="M4 6H29" stroke="#d8f2ff" />
        <g fontFamily="'Open Sans Condensed', 'Open Sans', sans-serif" fontWeight="bold" strokeLinejoin="round">
          <text x="5" y="26" fontSize="18" fill="#fff" stroke="#fff" strokeWidth=".500">File</text>
          <text x="33" y="26" fontSize="17" fill="#129bd8" stroke="#fff" strokeWidth="4" paintOrder="stroke">Thiết Kế.vn</text>
        </g>
      </Logo>
      <Watermark>Copyright © FileThietKe.vn</Watermark>
    </Desktop>
  );
}
